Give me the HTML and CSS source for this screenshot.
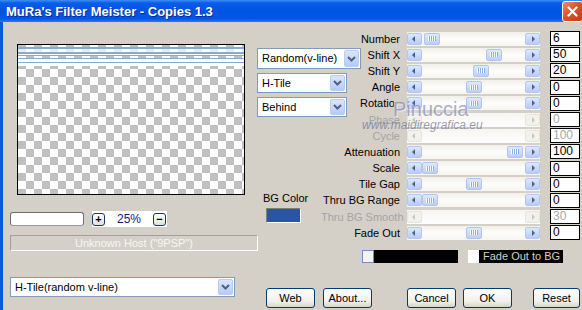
FILE: index.html
```html
<!DOCTYPE html>
<html lang="en">
<head>
  <meta charset="UTF-8">
  <title>MuRa's Filter Meister - Copies 1.3</title>
  <link rel="stylesheet" href="styles.css">
</head>
<body>
  <div class="window">
    <div class="titlebar">
      <span>MuRa's Filter Meister - Copies 1.3</span>
      <div class="close">
        <svg width="11" height="11" viewBox="0 0 11 11"><path d="M1.5 1.5l8 8M9.5 1.5l-8 8" stroke="#fff" stroke-width="2.2" stroke-linecap="round"/></svg>
      </div>
    </div>

    <div class="frame">
      <div class="left">
        <div class="preview">
          <div class="stripes"></div>
        </div>

        <div class="zoomrow">
          <div class="zinput"></div>
          <div class="zbox">
            <span class="zbtn">+</span>
            <span class="zval">25%</span>
            <span class="zbtn">−</span>
          </div>
        </div>

        <div class="status">Unknown Host ("9PSP")</div>

        <div class="select wide">
          <span>H-Tile(random v-line)</span>
          <i class="dd"><svg width="9" height="6" viewBox="0 0 9 6"><path d="M1 1l3.5 3.5L8 1" stroke="#4d6185" stroke-width="2" fill="none"/></svg></i>
        </div>
      </div>

      <div class="main">
        <div class="top">
          <div class="mid">
            <div class="select s1">
              <span>Random(v-line)</span>
              <i class="dd"><svg width="9" height="6" viewBox="0 0 9 6"><path d="M1 1l3.5 3.5L8 1" stroke="#4d6185" stroke-width="2" fill="none"/></svg></i>
            </div>
            <div class="select s2">
              <span>H-Tile</span>
              <i class="dd"><svg width="9" height="6" viewBox="0 0 9 6"><path d="M1 1l3.5 3.5L8 1" stroke="#4d6185" stroke-width="2" fill="none"/></svg></i>
            </div>
            <div class="select s2">
              <span>Behind</span>
              <i class="dd"><svg width="9" height="6" viewBox="0 0 9 6"><path d="M1 1l3.5 3.5L8 1" stroke="#4d6185" stroke-width="2" fill="none"/></svg></i>
            </div>

            <div class="bglabel">BG Color</div>
            <div class="bgswatch"></div>
          </div>

          <div class="right">
            <div class="sliders" id="sliders"></div>

            <div class="fade">
              <span class="fbox"></span>
              <span class="fbar"></span>
              <span class="fcheck"></span>
              <span class="flabel">Fade Out to BG</span>
            </div>
          </div>
        </div>

        <div class="footer">
          <button class="btn web">Web</button>
          <button class="btn about">About...</button>
          <button class="btn cancel">Cancel</button>
          <button class="btn ok">OK</button>
          <button class="btn reset">Reset</button>
        </div>
      </div>
    </div>

    <div class="wm1">Pinuccia</div>
    <div class="wm2">www.maidiregrafica.eu</div>
  </div>

  <script>
    // label, value, thumb offset (null = disabled)
    const rows = [
      ["Number", "6", 2],
      ["Shift X", "50", 64],
      ["Shift Y", "20", 51],
      ["Angle", "0", 44],
      ["Rotation", "0", 44],
      ["Phase", "0", null],
      ["Cycle", "100", null],
      ["Attenuation", "100", 85],
      ["Scale", "0", 0],
      ["Tile Gap", "0", 44],
      ["Thru BG Range", "0", 0],
      ["Thru BG Smooth", "30", null],
      ["Fade Out", "0", 44]
    ];

    const grid = document.getElementById("sliders");
    rows.forEach(r => {
      const off = r[2] === null;
      const label = document.createElement("div");
      label.className = "lbl" + (off ? " off" : "");
      if (r[0] === "Rotation") {
        label.innerHTML = '<span class="clip">Rotation</span>';
      } else {
        label.textContent = r[0];
      }

      const sb = document.createElement("div");
      sb.className = "sb" + (off ? " off" : "");
      let thumb = "";
      if (!off) {
        thumb = '<span class="thumb" style="margin-left:' + r[2] + 'px"></span>';
      }
      sb.innerHTML = '<span class="arr l"></span><span class="track">' + thumb + '</span><span class="arr r"></span>';

      const val = document.createElement("div");
      val.className = "val" + (off ? " off" : "");
      val.textContent = r[1];

      grid.appendChild(label);
      grid.appendChild(sb);
      grid.appendChild(val);
    });
  </script>
</body>
</html>
```

FILE: styles.css
```css
body {
  margin: 0;
  width: 582px;
  height: 310px;
  overflow: hidden;
  background-color: #d4d0c8;
  color: #000;
  font-family: "Liberation Sans", Arial, sans-serif;
  font-size: 11px;
}

.window {
  position: relative;
  height: 310px;
  display: flex;
  flex-direction: column;
}

.titlebar {
  height: 22px;
  flex: none;
  display: flex;
  align-items: center;
  justify-content: space-between;
  padding-left: 6px;
  background: linear-gradient(#3d8ff8 0, #0a5ce9 3px, #0054e3 50%, #0056ea 85%, #2a78f4 100%);
  color: white;
  font: bold 13px "Liberation Sans", Arial, sans-serif;
  text-shadow: 1px 1px #0d2a8c;
}

.close {
  width: 21px;
  height: 21px;
  box-sizing: border-box;
  border: 1px solid #fff;
  border-radius: 3px;
  margin-right: -1px;
  background: linear-gradient(135deg, #f0906e, #d9532c 45%, #c13b18);
  display: flex;
  align-items: center;
  justify-content: center;
}

.frame {
  flex: 1;
  display: flex;
  border-left: 3px solid #0b57e0;
}

/* left column */
.left {
  width: 247px;
  flex: none;
  padding-left: 7px;
}

.preview {
  box-sizing: border-box;
  width: 228px;
  height: 151px;
  margin: 22px 0 0 7px;
  border: 1px solid #000;
  background: conic-gradient(#fff 25%, #c0c0c0 0 50%, #fff 0 75%, #c0c0c0 0) 0 0 / 16px 16px;
}

.stripes {
  height: 21px;
  background: linear-gradient(to bottom,
    transparent 0 2px, #86a9d0 2px 4px, rgba(255,255,255,.7) 4px 7px,
    #86a9d0 7px 9px, #fff 9px 10px, #86a9d0 10px 11px,
    transparent 11px 13px, #86a9d0 13px 14px, #fff 14px 17px,
    #86a9d0 17px 18px, #fff 18px 21px);
}

.zoomrow {
  display: flex;
  align-items: center;
  height: 16px;
  margin-top: 16px;
}

.zinput {
  width: 74px;
  height: 14px;
  box-sizing: border-box;
  border: 1px solid #6e6e6e;
  border-bottom-color: #9a9a9a;
  border-radius: 3px;
  background: #fff;
}

.zbox {
  width: 75px;
  height: 16px;
  margin-left: 8px;
  padding-right: 1px;
  box-sizing: border-box;
  background: #fff;
  display: flex;
  align-items: center;
  justify-content: space-between;
}

.zbtn {
  width: 13px;
  height: 13px;
  box-sizing: border-box;
  border: 1px solid #1d3a66;
  border-radius: 3px;
  background: linear-gradient(#fff, #e2e0d8);
  font-weight: bold;
  font-size: 11px;
  line-height: 11px;
  text-align: center;
}

.zval {
  color: #0a1a80;
  font-size: 12px;
}

.status {
  width: 248px;
  height: 16px;
  margin-top: 8px;
  box-sizing: border-box;
  border: 1px solid;
  border-color: #a0a0a0 #fff #fff #a0a0a0;
  color: #f6f6f6;
  text-align: center;
  line-height: 14px;
}

/* dropdowns */
.select {
  display: flex;
  height: 20px;
  box-sizing: border-box;
  border: 1px solid #7f9db9;
  background: #fff;
}

.select span {
  flex: 1;
  padding-left: 4px;
  line-height: 18px;
  white-space: nowrap;
  overflow: hidden;
}

.select .dd {
  width: 15px;
  margin: 1px;
  box-sizing: border-box;
  border: 1px solid #b9cbf3;
  border-radius: 2px;
  background: linear-gradient(#dbe5fd, #b6cbf7);
  display: flex;
  align-items: center;
  justify-content: center;
}

.select.wide {
  width: 225px;
  margin-top: 26px;
}

.main {
  flex: 1;
  display: flex;
  flex-direction: column;
}

.top {
  display: flex;
}

.mid {
  width: 104px;
  flex: none;
  display: flex;
  flex-direction: column;
  align-items: flex-start;
}

.select.s1 {
  width: 104px;
  height: 21px;
  margin-top: 26px;
}

.select.s2 {
  width: 90px;
  margin-top: 4px;
}

.bglabel {
  margin: 75px 0 0 6px;
  line-height: 13px;
}

.bgswatch {
  width: 35px;
  height: 15px;
  margin: 3px 0 0 9px;
  box-sizing: border-box;
  border: 1px solid;
  border-color: #808080 #fff #fff #808080;
  background: #2b55a0;
}

/* sliders */
.right {
  margin-left: -40px;
  margin-top: 8.5px;
}

.sliders {
  display: grid;
  grid-template-columns: 79px 140px 40px;
  grid-auto-rows: 16.2px;
  align-items: center;
}

.lbl {
  text-align: right;
  white-space: nowrap;
}

.lbl.off {
  color: #a4a4a4;
}

.clip {
  display: inline-block;
  width: 34px;
  margin-right: 6px;
  overflow: hidden;
  text-align: left;
  vertical-align: top;
}

.sb {
  display: flex;
  align-items: center;
  height: 14px;
  margin-left: 7px;
  background: linear-gradient(#f1efe8, #fdfdfb 50%, #f6f5f0);
}

.arr {
  width: 15px;
  height: 12px;
  box-sizing: border-box;
  border: 1px solid #b4c7f2;
  border-radius: 2px;
  background: linear-gradient(#dde7fe, #b8ccf8);
  display: flex;
  align-items: center;
  justify-content: center;
}

.arr::before {
  content: "";
  border: 3.5px solid transparent;
}

.arr.l::before {
  border-left-width: 0;
  border-right-color: #4a5f8c;
  margin-right: 2px;
}

.arr.r::before {
  border-right-width: 0;
  border-left-color: #4a5f8c;
  margin-left: 2px;
}

.track {
  flex: 1;
  display: flex;
  align-items: center;
}

.thumb {
  width: 16px;
  height: 12px;
  box-sizing: border-box;
  border: 1px solid #b0c5f2;
  border-radius: 2px;
  background: linear-gradient(#dfe8fe, #bcd0f8);
  display: flex;
  align-items: center;
  justify-content: center;
}

.thumb::before {
  content: "";
  width: 8px;
  height: 5px;
  background: repeating-linear-gradient(to right, #fff 0 1px, #8caef0 1px 2px);
}

.sb.off {
  background: linear-gradient(#f6f5f1, #fefefe);
}

.sb.off .arr {
  border-color: #e6e4dc;
  background: #f2f1ec;
}

.sb.off .arr.l::before {
  border-right-color: #c8c6be;
}

.sb.off .arr.r::before {
  border-left-color: #c8c6be;
}

.val {
  width: 30px;
  height: 15px;
  margin-left: 10px;
  box-sizing: border-box;
  border: 1px solid #000;
  background: #fff;
  padding-left: 2px;
  font-size: 12px;
  line-height: 13px;
}

.val.off {
  color: #a8a8a8;
}

.fade {
  display: flex;
  height: 13px;
  margin: 9px 0 0 41px;
}

.fbox {
  width: 12px;
  box-sizing: border-box;
  border: 1px solid #6f8fbf;
  background: #f4f4f4;
}

.fbar {
  width: 84px;
  background: #000;
}

.fcheck {
  width: 11px;
  margin-left: 10px;
  background: #fff;
}

.flabel {
  width: 84px;
  padding-left: 4px;
  box-sizing: border-box;
  background: #000;
  color: #d4d0c8;
  line-height: 13px;
  white-space: nowrap;
}

/* buttons */
.footer {
  display: flex;
  margin-top: 25px;
}

.btn {
  width: 49px;
  height: 20px;
  padding: 0;
  border: 1px solid #003c74;
  border-radius: 3px;
  background: linear-gradient(#fff, #f0efea 70%, #d8d3c8);
  font-family: "Liberation Sans", Arial, sans-serif;
  font-size: 11px;
  color: #000;
}

.web { margin-left: 9px; }
.about { margin-left: 8px; }
.cancel { margin-left: 35px; }
.ok { margin-left: 7px; }
.reset { margin-left: 21px; width: 47px; }

/* watermark */
.wm1 {
  position: absolute;
  left: 393px;
  top: 99px;
  font-size: 20px;
  line-height: 20px;
  color: rgba(120, 120, 165, 0.6);
  text-shadow: 1px 1px rgba(255, 255, 255, 0.5);
}

.wm2 {
  position: absolute;
  left: 362px;
  top: 118px;
  font-size: 12px;
  line-height: 14px;
  font-style: italic;
  color: rgba(110, 110, 150, 0.7);
}
```
